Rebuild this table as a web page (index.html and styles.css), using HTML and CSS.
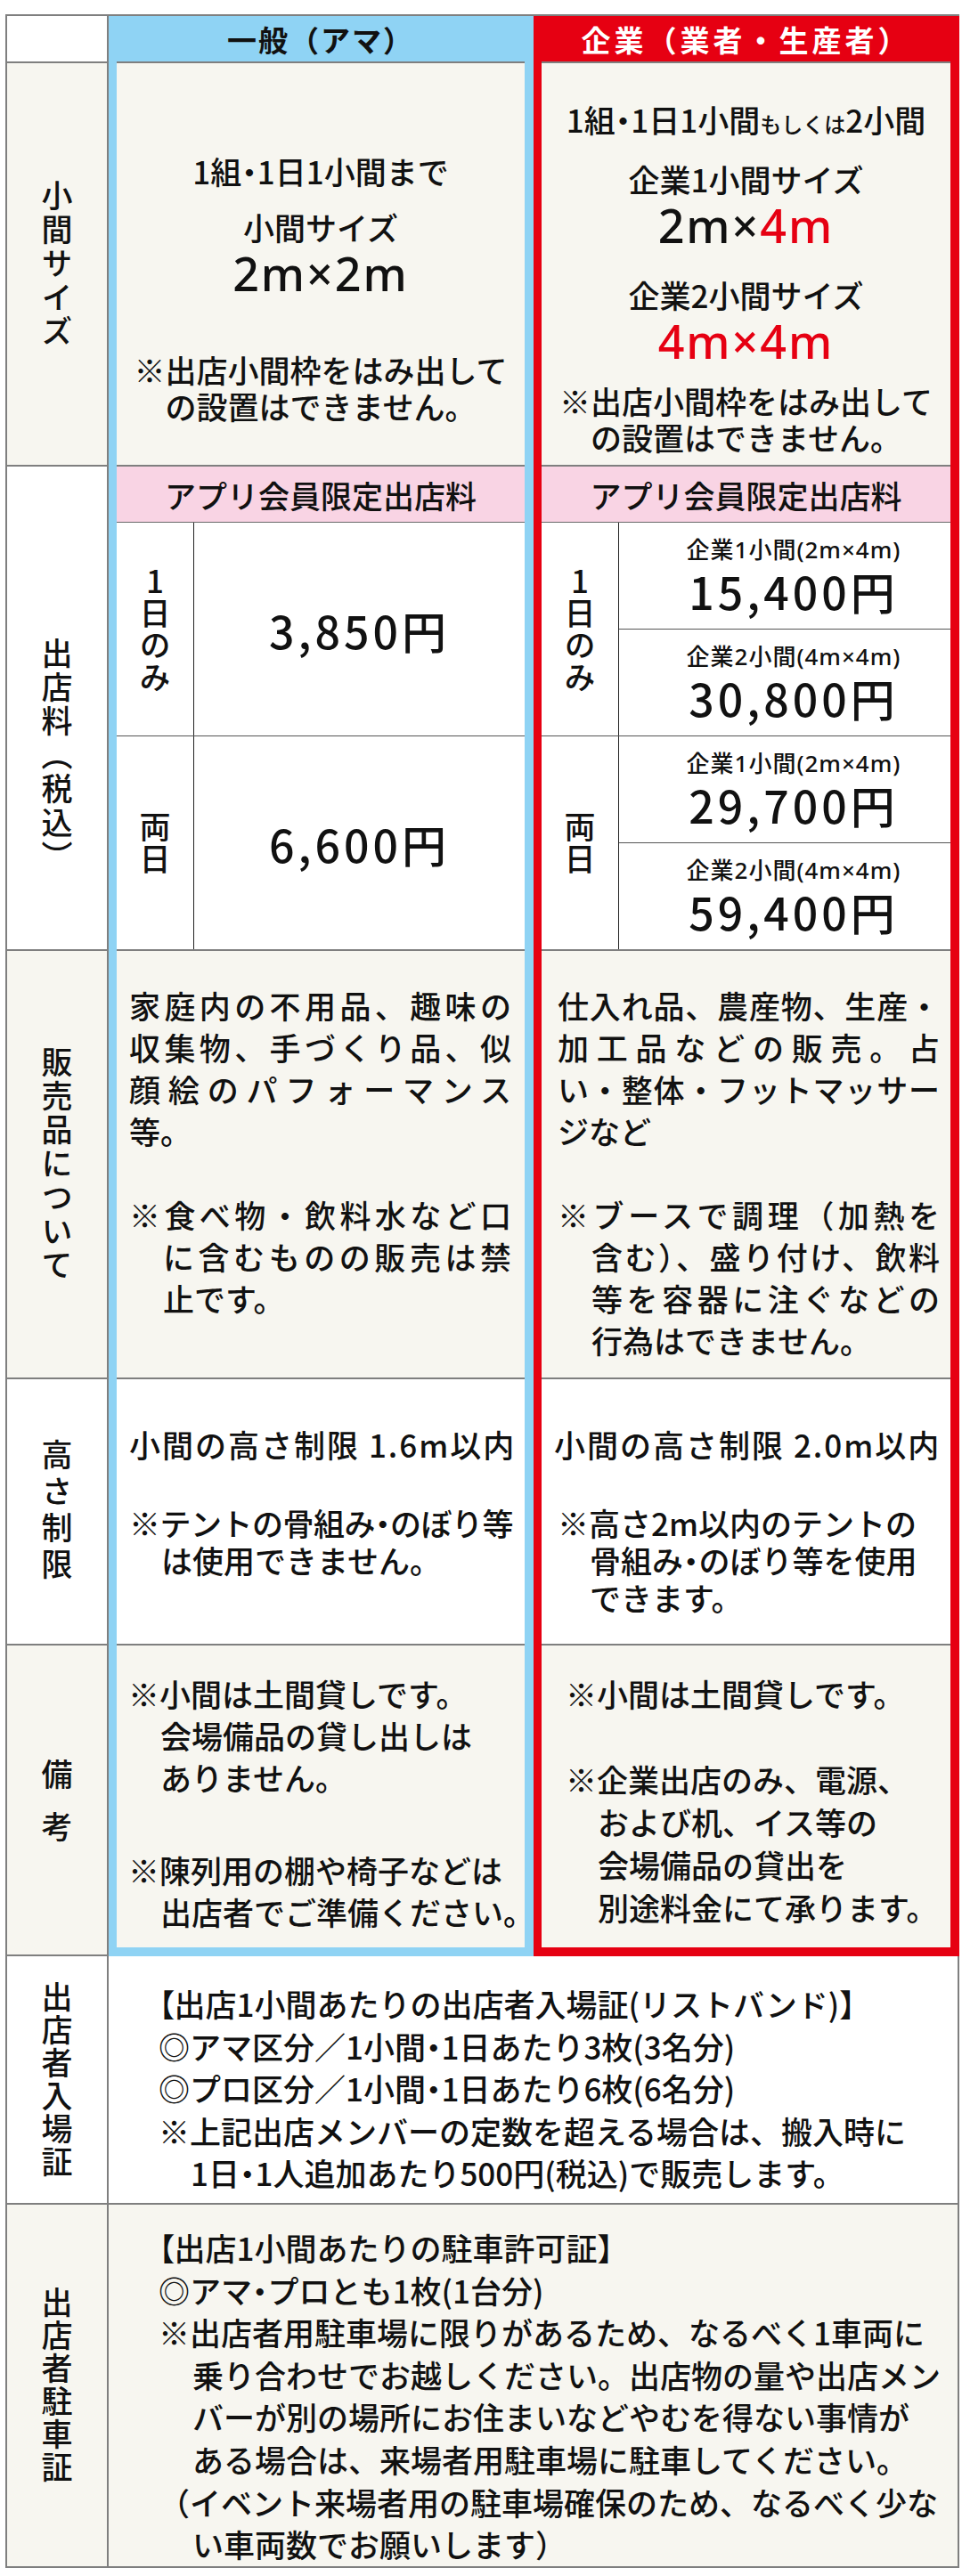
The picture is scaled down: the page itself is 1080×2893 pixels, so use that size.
FILE: index.html
```html
<!DOCTYPE html>
<html lang="ja">
<head>
<meta charset="utf-8">
<title>出店区分・出店料</title>
<link rel="stylesheet" href="styles.css">
</head>
<body>
<div class="tbl">
  <!-- header -->
  <div class="r1 c1 lab"></div>
  <div class="r1 c2 cell hd hd-blue">一般（アマ）</div>
  <div class="r1 c3 cell hd hd-red">企業（業者・生産者）</div>

  <!-- 小間サイズ -->
  <div class="r2 c1 lab cream"><span class="vt">小間サイズ</span></div>
  <div class="r2 c2 cell cream size size-b">
    <p class="ln">1組<span class="nd">・</span>1日1小間まで</p>
    <p class="ln mt15">小間サイズ</p>
    <p class="big">2m×2m</p>
    <p class="nt mtb">※出店小間枠をはみ出して<br>の設置はできません。</p>
  </div>
  <div class="r2 c3 cell cream size size-r">
    <p class="ln">1組<span class="nd">・</span>1日1小間<small>もしくは</small>2小間</p>
    <p class="ln mt14">企業1小間サイズ</p>
    <p class="big">2m×<em>4m</em></p>
    <p class="ln mt26">企業2小間サイズ</p>
    <p class="big"><em>4m×4m</em></p>
    <p class="nt mtr">※出店小間枠をはみ出して<br>の設置はできません。</p>
  </div>

  <!-- 出店料 -->
  <div class="r3 c1 lab fee-lab"><span class="vt">出店料（税込）</span></div>
  <div class="r3 c2 cell fee">
    <div class="pink">アプリ会員限定出店料</div>
    <div class="frow">
      <div class="slab"><span class="vt up">1日のみ</span></div>
      <div class="pr">3,850円</div>
    </div>
    <div class="frow">
      <div class="slab"><span class="vt">両日</span></div>
      <div class="pr">6,600円</div>
    </div>
  </div>
  <div class="r3 c3 cell fee">
    <div class="pink">アプリ会員限定出店料</div>
    <div class="frow">
      <div class="slab"><span class="vt up">1日のみ</span></div>
      <div class="prs">
        <div class="pi"><span class="sm">企業1小間(2m×4m)</span><span class="pv">15,400円</span></div>
        <div class="pi"><span class="sm">企業2小間(4m×4m)</span><span class="pv">30,800円</span></div>
      </div>
    </div>
    <div class="frow">
      <div class="slab"><span class="vt">両日</span></div>
      <div class="prs">
        <div class="pi"><span class="sm">企業1小間(2m×4m)</span><span class="pv">29,700円</span></div>
        <div class="pi"><span class="sm">企業2小間(4m×4m)</span><span class="pv">59,400円</span></div>
      </div>
    </div>
  </div>

  <!-- 販売品について -->
  <div class="r4 c1 lab cream"><span class="vt">販売品について</span></div>
  <div class="r4 c2 cell cream txt sale sale-b">
    <p class="j">家庭内の不用品、趣味の</p>
    <p class="j">収集物、手づくり品、似</p>
    <p class="j">顔絵のパフォーマンス</p>
    <p>等。</p>
    <p class="j mt47">※食べ物・飲料水など口</p>
    <p class="j ind">に含むものの販売は禁</p>
    <p class="ind">止です。</p>
  </div>
  <div class="r4 c3 cell cream txt sale sale-r">
    <p class="j">仕入れ品、農産物、生産・</p>
    <p class="j">加工品などの販売。占</p>
    <p class="j">い・整体・フットマッサー</p>
    <p>ジなど</p>
    <p class="j mt47">※ブースで調理（加熱を</p>
    <p class="j ind">含む）、盛り付け、飲料</p>
    <p class="j ind">等を容器に注ぐなどの</p>
    <p class="ind">行為はできません。</p>
  </div>

  <!-- 高さ制限 -->
  <div class="r5 c1 lab"><span class="vt wide">高さ制限</span></div>
  <div class="r5 c2 cell txt hgt hgt-b">
    <p class="sp">小間の高さ制限 1.6m以内</p>
    <p class="mt46 tight">※テントの骨組み<span class="nd">・</span>のぼり等</p>
    <p class="ind2">は使用できません。</p>
  </div>
  <div class="r5 c3 cell txt hgt hgt-r">
    <p class="sp">小間の高さ制限 2.0m以内</p>
    <p class="mt46 nl">※高さ2m以内のテントの</p>
    <p class="ind2 nl">骨組み<span class="nd">・</span>のぼり等を使用</p>
    <p class="ind2 nl">できます。</p>
  </div>

  <!-- 備考 -->
  <div class="r6 c1 lab cream"><span class="vt bk">備考</span></div>
  <div class="r6 c2 cell cream txt rem rem-b">
    <p>※小間は土間貸しです。</p>
    <p class="ind2">会場備品の貸し出しは</p>
    <p class="ind2">ありません。</p>
    <p class="mt57">※陳列用の棚や椅子などは</p>
    <p class="ind2">出店者でご準備ください。</p>
  </div>
  <div class="r6 c3 cell cream txt rem rem-r">
    <p>※小間は土間貸しです。</p>
    <p class="mt48">※企業出店のみ、電源、</p>
    <p class="ind2">および机、イス等の</p>
    <p class="ind2">会場備品の貸出を</p>
    <p class="ind2">別途料金にて承ります。</p>
  </div>

  <!-- 出店者入場証 -->
  <div class="r7 c1 lab"><span class="vt nar">出店者入場証</span></div>
  <div class="r7 c23 cell wide-cell txt ent">
    <p><span class="ob">【</span>出店1小間あたりの出店者入場証(リストバンド)】</p>
    <p>◎アマ区分／1小間<span class="nd">・</span>1日あたり3枚(3名分)</p>
    <p>◎プロ区分／1小間<span class="nd">・</span>1日あたり6枚(6名分)</p>
    <p>※上記出店メンバーの定数を超える場合は、搬入時に</p>
    <p class="ind2">1日<span class="nd">・</span>1人追加あたり500円(税込)で販売します。</p>
  </div>

  <!-- 出店者駐車証 -->
  <div class="r8 c1 lab cream"><span class="vt nar">出店者駐車証</span></div>
  <div class="r8 c23 cell wide-cell cream txt park">
    <p><span class="ob">【</span>出店1小間あたりの駐車許可証】</p>
    <p>◎アマ<span class="nd">・</span>プロとも1枚(1台分)</p>
    <p>※出店者用駐車場に限りがあるため、なるべく1車両に</p>
    <p class="ind3">乗り合わせでお越しください。出店物の量や出店メン</p>
    <p class="ind3">バーが別の場所にお住まいなどやむを得ない事情が</p>
    <p class="ind3">ある場合は、来場者用駐車場に駐車してください。</p>
    <p>（イベント来場者用の駐車場確保のため、なるべく少な</p>
    <p class="ind3">い車両数でお願いします）</p>
  </div>

  <!-- column frames -->
  <div class="frame fb"></div>
  <div class="frame fr"></div>
</div>
</body>
</html>
```

FILE: styles.css
```css
* {
  box-sizing: border-box;
  margin: 0;
  padding: 0;
}

html,
body {
  background: #ffffff;
}

body {
  margin: 0;
  font-family: "Noto Sans CJK JP", "Noto Sans", sans-serif;
  font-weight: 500;
  color: #111111;
}

/* ---------- table grid ---------- */
.tbl {
  display: grid;
  width: 1071px;
  margin: 16px 0 0 6px;
  grid-template-columns: 116px 477px 478px;
  grid-template-rows: 53px 453px 544px 481px 299px 349px 279px 408px;
  border-top: 2px solid #7f7f7f;
}

.r1 { grid-row: 1; }
.r2 { grid-row: 2; }
.r3 { grid-row: 3; }
.r4 { grid-row: 4; }
.r5 { grid-row: 5; }
.r6 { grid-row: 6; }
.r7 { grid-row: 7; }
.r8 { grid-row: 8; }

.c1 { grid-column: 1; }
.c2 { grid-column: 2; }
.c3 { grid-column: 3; }
.c23 { grid-column: 2 / 4; }

.lab {
  display: flex;
  align-items: center;
  justify-content: center;
  background: #ffffff;
  border-left: 2px solid #7f7f7f;
  border-right: 2px solid #7f7f7f;
  border-bottom: 2px solid #7f7f7f;
}

.cell {
  background: #ffffff;
  border-bottom: 2px solid #7f7f7f;
  padding: 0 10px 0 9px;
}

.cream {
  background: #f7f6f0;
}

.wide-cell {
  border-right: 2px solid #7f7f7f;
  padding: 0 0 0 56px;
}

/* column frames overlaid on the grid cells */
.frame {
  grid-row: 1 / 7;
  border-style: solid;
  border-width: 0 10px 10px 9px;
  z-index: 2;
  pointer-events: none;
}

.fb {
  grid-column: 2;
  border-color: #8fd3f4;
}

.fr {
  grid-column: 3;
  border-color: #e60012;
}

/* ---------- header ---------- */
.hd {
  display: flex;
  align-items: center;
  justify-content: center;
  font-size: 33px;
  font-weight: 700;
  letter-spacing: 2px;
}

.hd-blue {
  background: #8fd3f4;
}

.hd-red {
  background: #e60012;
  color: #ffffff;
  letter-spacing: 4px;
}

/* ---------- vertical labels ---------- */
.vt {
  writing-mode: vertical-rl;
  font-size: 35px;
  line-height: 1;
  letter-spacing: 3px;
}

.vt.wide {
  letter-spacing: 6px;
}

.vt.nar {
  letter-spacing: 2px;
}

.vt.bk {
  letter-spacing: 24px;
  margin-bottom: -24px;
}

.up {
  text-orientation: upright;
}

.fee-lab {
  padding-top: 108px;
}

/* ---------- size row ---------- */
.size {
  display: flex;
  flex-direction: column;
  align-items: center;
  text-align: center;
}

.size-b {
  padding-top: 97px;
}

.size-r {
  padding-top: 39px;
}

.ln {
  font-size: 35px;
  line-height: 48px;
  white-space: nowrap;
}

.ln small {
  font-size: 24px;
}

.big {
  font-family: "Noto Sans", "Noto Sans CJK JP", sans-serif;
  font-size: 52px;
  line-height: 56px;
  letter-spacing: 2px;
  white-space: nowrap;
}

.big em {
  font-style: normal;
  color: #e60012;
}

.nt {
  font-size: 35px;
  line-height: 41px;
  white-space: nowrap;
}

.mt14 { margin-top: 14px; }
.mt15 { margin-top: 15px; }
.mt26 { margin-top: 26px; }
.mtb { margin-top: 59px; }
.mtr { margin-top: 18px; }

.nd {
  font-feature-settings: "palt";
}

/* ---------- fee row ---------- */
.fee {
  display: flex;
  flex-direction: column;
}

.pink {
  height: 63px;
  flex: none;
  background: #f9d4e4;
  border-bottom: 1px solid #6a6a6a;
  display: flex;
  align-items: center;
  justify-content: center;
  font-size: 35px;
}

.frow {
  height: 240px;
  flex: none;
  display: flex;
  border-bottom: 1px solid #555555;
}

.frow + .frow {
  height: auto;
  flex: 1;
  border-bottom: 0;
}

.slab {
  width: 87px;
  flex: none;
  border-right: 1px solid #222222;
  display: flex;
  align-items: center;
  justify-content: center;
}

.slab .vt {
  letter-spacing: 1px;
}

.pr {
  flex: 1;
  display: flex;
  align-items: center;
  justify-content: center;
  font-size: 50px;
  letter-spacing: 4px;
}

.prs {
  flex: 1;
  display: flex;
  flex-direction: column;
}

.pi {
  height: 120px;
  flex: none;
  border-bottom: 1px solid #555555;
  display: flex;
  flex-direction: column;
  align-items: center;
  justify-content: center;
  padding-left: 20px;
}

.pi + .pi {
  height: auto;
  flex: 1;
  border-bottom: 0;
}

.sm {
  font-family: "Noto Sans", "Noto Sans CJK JP", sans-serif;
  font-size: 26px;
  line-height: 28px;
  letter-spacing: 1px;
  white-space: nowrap;
}

.pv {
  font-size: 50px;
  line-height: 56px;
  letter-spacing: 4px;
  margin-top: 4px;
  white-space: nowrap;
}

/* ---------- text rows ---------- */
.txt p {
  font-size: 35px;
}

.j {
  text-align: justify;
  text-align-last: justify;
}

.ind { padding-left: 38px; }
.ind2 { padding-left: 36px; }
.ind3 { padding-left: 38px; }

.sale p {
  line-height: 47px;
}

.sale {
  padding-top: 37px;
}

.sale-b {
  padding-left: 23px;
  padding-right: 25px;
}

.sale-r {
  padding-left: 27px;
  padding-right: 22px;
}

.mt47 { margin-top: 47px; }

.hgt {
  padding-top: 52px;
}

.hgt p {
  line-height: 42px;
  white-space: nowrap;
}

.hgt-b {
  padding-left: 23px;
}

.hgt-r {
  padding-left: 23px;
}

.hgt .sp {
  letter-spacing: 2px;
}

.hgt .tight {
  letter-spacing: -0.5px;
}

.hgt-r .nl {
  margin-left: 4px;
}

.mt46 { margin-top: 46px; }

.rem {
  padding-top: 30px;
}

.rem p {
  white-space: nowrap;
}

.rem-b p {
  line-height: 47px;
}

.rem-b {
  padding-left: 22px;
}

.rem-r p {
  line-height: 48px;
}

.rem-r {
  padding-left: 36px;
}

.mt57 { margin-top: 57px; }
.mt48 { margin-top: 48px; }

.ent {
  padding-top: 29px;
}

.ent p {
  line-height: 47.5px;
  white-space: nowrap;
}

.park {
  padding-top: 24px;
}

.park p {
  line-height: 47.6px;
  white-space: nowrap;
}

.ob {
  font-feature-settings: "palt";
}
```
